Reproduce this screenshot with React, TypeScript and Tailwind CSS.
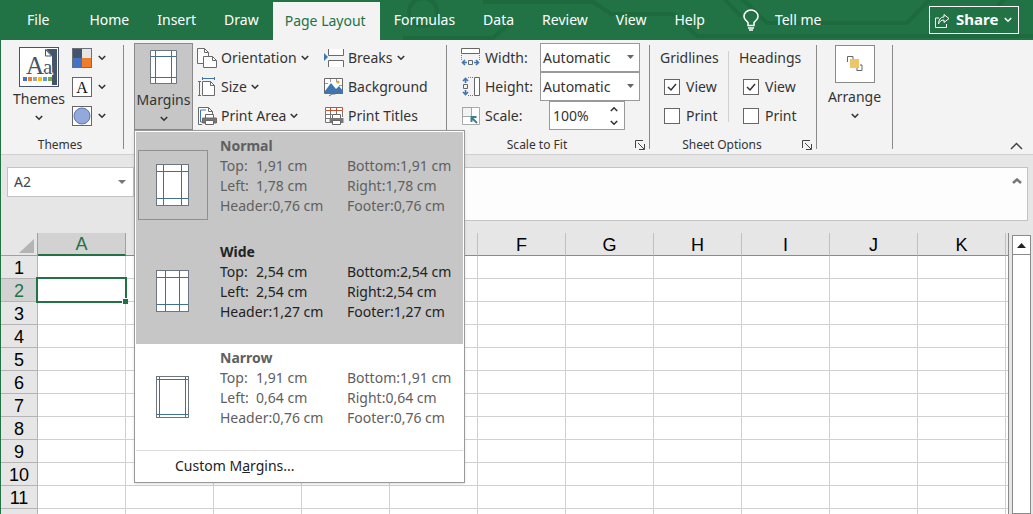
import React, { useState } from 'react';

const TABS = ['Home', 'Insert', 'Draw', 'Page Layout', 'Formulas', 'Data', 'Review', 'View', 'Help'];
const COLUMNS = ['A', 'B', 'C', 'D', 'E', 'F', 'G', 'H', 'I', 'J', 'K'];
const ROWS = [1, 2, 3, 4, 5, 6, 7, 8, 9, 10, 11];

const PRESETS = [
  { name: 'Normal', top: '1,91', bottom: '1,91', left: '1,78', right: '1,78', header: '0,76', footer: '0,76', x: 7, y: 7 },
  { name: 'Wide', top: '2,54', bottom: '2,54', left: '2,54', right: '2,54', header: '1,27', footer: '1,27', x: 9, y: 7 },
  { name: 'Narrow', top: '1,91', bottom: '1,91', left: '0,64', right: '0,64', header: '0,76', footer: '0,76', x: 3, y: 3 },
];

function Chevron({ className = '' }) {
  return (
    <svg width="8" height="6" viewBox="0 0 8 6" className={className} fill="none" stroke="currentColor" strokeWidth="1.6">
      <path d="M.8 1L4 4.200 7.200 1" />
    </svg>
  );
}

function MarginsPage({ x, y }: { x: number; y: number }) {
  return (
    <svg width="33" height="42" viewBox="0 0 33 42">
      <rect x="0.5" y="0.5" width="32" height="41" fill="#fff" stroke="#6b7680" />
      <path
        d={`M${x + 0.5} 1v40M${32.5 - x} 1v40M1 ${y + 0.5}h31M1 ${41.5 - y}h31`}
        stroke="#41718f"
      />
    </svg>
  );
}

function ThemesIcon() {
  return (
    <svg width="40" height="40" viewBox="0 0 40 40">
      <rect x="0.5" y="0.5" width="39" height="39" fill="#fff" stroke="#44546a" />
      <path d="M27 2h11v36h-5V9z" fill="#44546a" />
      <path d="M26.500 2.500l6 6.500h-6z" fill="#fff" stroke="#44546a" />
      <g fontFamily="Liberation Serif, serif" fill="#44546a" stroke="#fff" strokeWidth="2" paintOrder="stroke">
        <text x="24" y="27" fontSize="21">a</text>
        <text x="7" y="27" fontSize="25">A</text>
      </g>
      <path d="M4 30h4v4H4z" fill="#4472c4" />
      <path d="M9 30h4v4H9z" fill="#ed7d31" />
      <path d="M14 30h4v4h-4z" fill="#a5a5a5" />
      <path d="M19 30h4v4h-4z" fill="#ffc000" />
      <path d="M24 30h4v4h-4z" fill="#5b9bd5" />
      <path d="M29 30h4v4h-4z" fill="#70ad47" />
    </svg>
  );
}

function ColorsIcon() {
  return (
    <svg width="20" height="20" viewBox="0 0 20 20">
      <rect width="20" height="20" fill="#6b7078" />
      <path d="M1 1h9v9H1z" fill="#44546a" />
      <path d="M10 1h9v9h-9z" fill="#e7e6e6" />
      <path d="M1 10h9v9H1z" fill="#4472c4" />
      <path d="M10 10h9v9h-9z" fill="#f07d2c" />
    </svg>
  );
}

function FontsIcon() {
  return (
    <svg width="20" height="20" viewBox="0 0 20 20">
      <rect x="0.5" y="0.5" width="19" height="19" fill="#fff" stroke="#666" />
      <text x="10" y="16" textAnchor="middle" fontSize="16" fontFamily="Liberation Serif, serif" fill="#111">A</text>
    </svg>
  );
}

function EffectsIcon() {
  return (
    <svg width="20" height="20" viewBox="0 0 20 20">
      <rect x="0.5" y="0.5" width="19" height="19" fill="#fff" stroke="#666" />
      <circle cx="10" cy="10" r="8" fill="#93a9dc" stroke="#5c74b0" />
    </svg>
  );
}

function OrientationIcon() {
  return (
    <svg width="20" height="20" viewBox="0 0 20 20" fill="#fff" stroke="#6a6a6a">
      <path d="M.5.5h7l4 4v11H.5z" />
      <path d="M7.500.5v4h4" fill="none" />
      <path d="M6.500 8.500h9l4 4v7h-13z" />
      <path d="M15.500 8.500v4h4" fill="none" />
    </svg>
  );
}

function SizeIcon() {
  return (
    <svg width="20" height="20" viewBox="0 0 20 20" fill="none">
      <path d="M5.500 4.500h8l4 4v10h-12z" fill="#fff" stroke="#6a6a6a" />
      <path d="M13.500 4.500v4h4" stroke="#6a6a6a" />
      <path d="M5 1.500h13M5.500 0v3M17.500 0v3M2.500 5v14M1 4.500h3M1 18.500h3" stroke="#3d76b0" />
    </svg>
  );
}

function Printer() {
  return (
    <g>
      <path d="M8.500 8.500h8v4h-8z" fill="#fff" stroke="#666" />
      <path d="M5.500 12h14v5h-14z" fill="#777" />
      <path d="M8.500 14.500h8v4h-8z" fill="#fff" stroke="#666" />
    </g>
  );
}

function PrintAreaIcon() {
  return (
    <svg width="20" height="20" viewBox="0 0 20 20" fill="#fff" stroke="#6a6a6a">
      <path d="M5 18.500H1.500v-17h10l4 4V8" />
      <path d="M11.500 1.500v4h4" fill="none" />
      <path d="M7 16H3.500V4H9" fill="none" stroke="#3d76b0" />
      <Printer />
    </svg>
  );
}

function BreaksIcon() {
  return (
    <svg width="20" height="20" viewBox="0 0 20 20">
      <path d="M4.500 1v6.500h15V1M4.500 19v-6.500h15V19" fill="#fff" stroke="#6a6a6a" />
      <path d="M0 5l4 4-4 4z" fill="#3d76b0" />
    </svg>
  );
}

function BackgroundIcon() {
  return (
    <svg width="20" height="20" viewBox="0 0 20 20">
      <path d="M.5 1.500h18v15H.5z" fill="#fff" stroke="#6a6a6a" />
      <path d="M6.500 2v3M12.500 2v3M1 6.500h3M15 8.500h3" stroke="#999" />
      <path d="M1 14l6-8 5 6 3-3 4 5v3H1z" fill="#3d76b0" />
      <circle cx="14" cy="5" r="1.600" fill="#e8a33d" />
      <path d="M5 19l3-2h3l4-3" fill="none" stroke="#6a6a6a" />
    </svg>
  );
}

function PrintTitlesIcon() {
  return (
    <svg width="20" height="20" viewBox="0 0 20 20">
      <path d="M1.500 1.500h17v15h-17z" fill="#fff" />
      <path d="M1.500 5v11.500H6M1.500 8.500H8M1.500 12.500H6M6.500 5v7M12.500 5v3M18.500 5v6" fill="none" stroke="#777" />
      <path d="M1.500 1.500h17v3h-17zM6.500 1.500v3M12.500 1.500v3" fill="#fff" stroke="#c8502d" />
      <Printer />
    </svg>
  );
}

function FitWidthIcon() {
  return (
    <svg width="20" height="20" viewBox="0 0 20 20" fill="none">
      <path d="M.5.500h18v5H.5z" fill="#fff" stroke="#666" />
      <path d="M.5 7v5M18.500 7v5" stroke="#777" strokeDasharray="1 1" />
      <path d="M7.500 12.500h4v4h-4z" stroke="#666" />
      <path d="M6 14.500H1M4 12l-2.500 2.500L4 17M13 14.500h5M15 12l2.500 2.500L15 17" stroke="#3d76b0" strokeWidth="1.600" />
    </svg>
  );
}

function FitHeightIcon() {
  return (
    <svg width="20" height="20" viewBox="0 0 20 20" fill="none">
      <path d="M13.500.5h5v18h-5z" fill="#fff" stroke="#666" />
      <path d="M7 .5h6M7 18.500h6" stroke="#777" strokeDasharray="1 1" />
      <path d="M2.500 7.500h4v4h-4z" stroke="#666" />
      <path d="M4.500 6V1M2 4l2.500-2.500L7 4M4.500 13v5M2 15l2.500 2.500L7 15" stroke="#3d76b0" strokeWidth="1.600" />
    </svg>
  );
}

function ScaleIcon() {
  return (
    <svg width="20" height="20" viewBox="0 0 20 20" fill="none">
      <path d="M1.500 11v7.500h17v-17H11" fill="#fff" stroke="#aaa" />
      <path d="M1.500 1.500h9v9h-9z" fill="#f3f3f3" stroke="#555" strokeDasharray="1 1" />
      <path d="M16 17l-5-5M10.500 16v-5h5" stroke="#3d7f95" strokeWidth="2" />
    </svg>
  );
}

function ArrangeIcon() {
  return (
    <svg width="16" height="16" viewBox="0 0 16 16" fill="none">
      <path d="M6 .5H.5V6M5 .5h1V3M10 14.500h5V9H13M10 15v-3" stroke="#666" />
      <path d="M3 3h9v9H3z" fill="#f0c468" />
    </svg>
  );
}

function Launcher({ label }: { label: string }) {
  return (
    <button aria-label={label}>
      <svg width="10" height="10" viewBox="0 0 10 10" fill="none" stroke="#444">
        <path d="M.5 8V.5H8M3 3l6 6M9.500 4v5.500H4" />
      </svg>
    </button>
  );
}

function Separator() {
  return <div className="my-[5px] w-px shrink-0 bg-[#8a8a8a]" />;
}

function RibbonButton({ icon, label, arrow = false }: { icon: React.ReactNode; label: string; arrow?: boolean }) {
  return (
    <button className="flex h-[29px] items-center gap-1 whitespace-nowrap">
      {icon}
      <span>{label}</span>
      {arrow && <Chevron />}
    </button>
  );
}

function SheetOption({ title }: { title: string }) {
  return (
    <fieldset>
      <legend className="flex h-[29px] items-center">{title}</legend>
      {['View', 'Print'].map((name) => (
        <label key={name} className="ml-1 flex h-[29px] items-center gap-[6px]">
          <span className="relative flex">
            <input
              type="checkbox"
              defaultChecked={name === 'View'}
              className="peer size-4 appearance-none border border-[#666] bg-white"
            />
            <svg
              width="16"
              height="16"
              viewBox="0 0 16 16"
              className="pointer-events-none absolute inset-0 hidden peer-checked:block"
              fill="none"
              stroke="#333"
              strokeWidth="1.500"
            >
              <path d="M4 8l3 3 5-6" />
            </svg>
          </span>
          {name}
        </label>
      ))}
    </fieldset>
  );
}

function Select({ id }: { id: string }) {
  return (
    <div className="relative flex w-[100px]">
      <select id={id} className="w-full appearance-none border border-[#999] bg-white pl-[2px] outline-none">
        <option>Automatic</option>
      </select>
      <svg width="7" height="4" viewBox="0 0 7 4" className="pointer-events-none absolute top-3 right-[6px]">
        <path d="M0 0h7L3.500 4z" fill="#666" />
      </svg>
    </div>
  );
}

function MarginsMenu({ selected, onSelect }: { selected: string; onSelect: (name: string) => void }) {
  return (
    <div
      role="menu"
      className="absolute top-full left-0 z-10 w-[331px] border border-[#999] bg-white p-px text-[#222] shadow-sm"
    >
      {PRESETS.map((p) => (
        <button
          key={p.name}
          role="menuitemradio"
          aria-checked={p.name === selected}
          onClick={() => onSelect(p.name)}
          className={`flex h-[106px] w-full items-start gap-3 pl-[2px] text-left leading-5 ${
            p.name === 'Narrow' ? 'bg-white' : 'bg-[#c6c6c6]'
          } ${p.name === 'Wide' ? 'text-[#222]' : 'text-[#606060]'}`}
        >
          <span
            className={`mt-[18px] flex size-[70px] items-center border pl-[17px] ${
              p.name === selected ? 'border-[#909090]' : 'border-transparent'
            }`}
          >
            <MarginsPage x={p.x} y={p.y} />
          </span>
          <span className="mt-1 grid auto-rows-[20px] grid-cols-[127px_auto] whitespace-nowrap">
            <b className="col-span-2">{p.name}</b>
            <span className="flex">
              <span className="w-9">Top:</span>
              {p.top} cm
            </span>
            <span>Bottom:{p.bottom} cm</span>
            <span className="flex">
              <span className="w-9">Left:</span>
              {p.left} cm
            </span>
            <span>Right:{p.right} cm</span>
            <span>Header:{p.header} cm</span>
            <span>Footer:{p.footer} cm</span>
          </span>
        </button>
      ))}
      <button role="menuitem" className="flex h-[31px] w-full items-center border-t border-[#ddd] pl-[39px]">
        <span>
          Custom M<u>a</u>rgins...
        </span>
      </button>
    </div>
  );
}

function TitleTabs() {
  return (
    <header className="relative flex h-10 shrink-0 items-stretch bg-[#217346] text-white">
      {/* circuit-like decoration behind the tabs */}
      <svg
        className="absolute top-0 right-0"
        width="660"
        height="40"
        viewBox="0 0 660 40"
        fill="none"
        stroke="#1d6a3f"
        strokeWidth="4"
      >
        <path d="M110 2h110l18 12h62l24 22h336M348-4l20 20M366-4l28 27h140l26-27M625 6l12-12M30 38h90l14-12" />
        <circle cx="50" cy="12" r="14" />
      </svg>
      <nav className="relative flex items-stretch pl-3">
        <button className="mr-3 px-3.5">File</button>
        {TABS.map((tab) => (
          <button
            key={tab}
            className={
              tab === 'Page Layout'
                ? 'mt-[2px] bg-[#f3f3f3] pr-3.5 pl-3 text-[#217346]'
                : 'px-3.5'
            }
          >
            {tab}
          </button>
        ))}
      </nav>
      <button className="relative ml-6 flex items-center gap-4">
        <svg width="16" height="22" viewBox="0 0 16 22" fill="none" stroke="#fff" strokeWidth="1.500">
          <path d="M5 16.500v-3C3 11.500 1 10 1 7.500a7 6.500 0 0 1 14 0c0 2.500-2 4-4 6v3zM5 19h6M6 21h4" />
        </svg>
        Tell me
      </button>
      <button className="relative my-[6px] mr-[14px] ml-auto flex w-[90px] items-center gap-[6px] border border-white pl-[5px] text-[15px] font-bold">
        <svg width="15" height="15" viewBox="0 0 15 15" fill="none" stroke="#fff" className="shrink-0">
          <path d="M4 5H.5v9.500h11V11" />
          <path d="M9 1.500l5 4-5 4V7C6 7 4.500 8.500 3.500 11 3.500 7 5.500 4 9 4z" />
        </svg>
        Share
        <Chevron className="shrink-0" />
      </button>
    </header>
  );
}

function Ribbon() {
  const [margins, setMargins] = useState('Normal');

  return (
    <div className="flex shrink-0 border-b border-[#d0d0d0] bg-[#f3f3f3]">
      <section className="w-[122px] pt-[3px]">
        <div className="flex h-[87px] pl-3">
          <button className="flex w-[52px] flex-col items-center pt-1">
            <ThemesIcon />
            <span className="leading-6">Themes</span>
            <Chevron className="mt-1" />
          </button>
          <div className="ml-[7px]">
            <button aria-label="Colors" className="flex h-[29px] items-center gap-[6px]"><ColorsIcon /><Chevron /></button>
            <button aria-label="Fonts" className="flex h-[29px] items-center gap-[6px]"><FontsIcon /><Chevron /></button>
            <button aria-label="Effects" className="flex h-[29px] items-center gap-[6px]"><EffectsIcon /><Chevron /></button>
          </div>
        </div>
        <h2 className="flex h-6 items-center justify-center pt-[6px] pr-1 text-xs">Themes</h2>
      </section>
      <Separator />

      <section className="flex w-[322px] items-start pt-[3px] pl-[10px]">
        <div className="relative">
          <button className="flex h-[87px] w-[59px] flex-col items-center border border-[#8a8a8a] bg-[#c6c6c6] pt-[6px]">
            <svg width="27" height="34" viewBox="0 0 27 34">
              <path d="M.5.500h26v33H.5z" fill="#fff" stroke="#6b7680" />
              <path d="M5.500 1v32M21.500 1v32M1 6.500h25M1 27.500h25" stroke="#41718f" />
            </svg>
            <span className="mt-1 leading-6">Margins</span>
            <Chevron className="mt-1" />
          </button>
          <MarginsMenu selected={margins} onSelect={setMargins} />
        </div>
        <div className="ml-1 w-[127px]">
          <RibbonButton icon={<OrientationIcon />} label="Orientation" arrow />
          <RibbonButton icon={<SizeIcon />} label="Size" arrow />
          <RibbonButton icon={<PrintAreaIcon />} label="Print Area" arrow />
        </div>
        <div>
          <RibbonButton icon={<BreaksIcon />} label="Breaks" arrow />
          <RibbonButton icon={<BackgroundIcon />} label="Background" />
          <RibbonButton icon={<PrintTitlesIcon />} label="Print Titles" />
        </div>
      </section>
      <Separator />

      <section className="w-[202px] pt-[3px]">
        <div className="grid h-[87px] grid-cols-[79px_auto] grid-rows-3 pl-[14px]">
          <label htmlFor="fit-width" className="flex items-center gap-1"><FitWidthIcon />Width:</label>
          <Select id="fit-width" />
          <label htmlFor="fit-height" className="flex items-center gap-1"><FitHeightIcon />Height:</label>
          <Select id="fit-height" />
          <label htmlFor="scale" className="flex items-center gap-1"><ScaleIcon />Scale:</label>
          <div className="ml-[9px] flex w-[76px] items-center border border-[#999] bg-white pr-[6px] pl-[3px]">
            <input id="scale" defaultValue="100%" className="w-full min-w-0 outline-none" />
            <div className="flex flex-col gap-2">
              <button aria-label="Increase" className="rotate-180"><Chevron className="block" /></button>
              <button aria-label="Decrease"><Chevron className="block" /></button>
            </div>
          </div>
        </div>
        <div className="flex h-6 items-center pt-[6px] pr-1">
          <h2 className="grow pr-2 text-center text-xs">Scale to Fit</h2>
          <Launcher label="Page setup" />
        </div>
      </section>
      <Separator />

      <section className="w-[166px] pt-[3px]">
        <div className="flex h-[87px] pl-[10px]">
          <SheetOption title="Gridlines" />
          <div className="mx-auto my-2 w-px bg-[#d0d0d0]" />
          <div className="w-[77px]"><SheetOption title="Headings" /></div>
        </div>
        <div className="flex h-6 items-center pt-[6px] pr-1">
          <h2 className="grow pr-2 text-center text-xs">Sheet Options</h2>
          <Launcher label="Sheet options" />
        </div>
      </section>
      <Separator />

      <section className="flex w-[75px] justify-center pt-[5px]">
        <button className="flex flex-col items-center self-start">
          <span className="flex h-[38px] w-10 items-center justify-center border border-[#8a8a8a] bg-white">
            <ArrangeIcon />
          </span>
          <span className="mt-[2px] leading-6">Arrange</span>
          <Chevron className="mt-1" />
        </button>
      </section>
      <Separator />

      <button aria-label="Collapse the ribbon" className="mt-auto mr-[10px] mb-1 ml-auto">
        <svg width="13" height="8" viewBox="0 0 13 8" fill="none" stroke="#444" strokeWidth="1.500">
          <path d="M1 7l5.500-5.500L12 7" />
        </svg>
      </button>
    </div>
  );
}

function FormulaBar() {
  return (
    <div className="flex h-[78px] shrink-0 items-start bg-[#e6e6e6] pt-3 pr-[5px] pl-[6px]">
      <div className="flex h-[30px] w-[127px] items-center border border-[#c3c3c3] bg-white pr-[7px] pl-[6px]">
        <input aria-label="Name box" defaultValue="A2" className="w-full min-w-0 text-[#444] outline-none" />
        <svg width="8" height="4" viewBox="0 0 8 4" className="shrink-0">
          <path d="M0 0h8L4 4z" fill="#777" />
        </svg>
      </div>
      <div className="ml-24 flex h-[54px] grow items-start border border-[#c3c3c3] bg-[#fdfdfd] pr-[5px]">
        <textarea aria-label="Formula bar" className="h-full grow resize-none outline-none" />
        <button aria-label="Collapse formula bar" className="mt-[10px]">
          <svg width="10" height="6" viewBox="0 0 10 6" fill="none" stroke="#777" strokeWidth="2.500">
            <path d="M1 5l4-3.500L9 5" />
          </svg>
        </button>
      </div>
    </div>
  );
}

function Sheet() {
  return (
    <div className="flex min-h-0 grow bg-[#e6e6e6]">
      <div className="min-w-0 grow overflow-hidden border-r border-[#8a8a8a] bg-white">
        <table className="w-full table-fixed border-separate border-spacing-0 font-[Liberation_Sans,Arial,sans-serif] text-lg leading-5 text-black">
          <thead>
            <tr className="h-[23px] bg-[#e6e6e6]">
              <th className="w-[37px] border-r border-b border-[#a0a0a0] p-0">
                <svg width="15" height="14" viewBox="0 0 15 14" className="mt-1 mr-[3px] ml-auto">
                  <path d="M15 0v14H0z" fill="#b4b4b4" />
                </svg>
              </th>
              {COLUMNS.map((col) => (
                <th
                  key={col}
                  className={`w-[88px] border-r p-0 font-normal ${
                    col === 'A'
                      ? 'border-b-2 border-r-[#a0a0a0] border-b-[#217346] bg-[#d2d2d2] pt-px text-[#217346]'
                      : 'border-b border-r-[#c0c0c0] border-b-[#8a8a8a] pt-[2px]'
                  }`}
                >
                  {col}
                </th>
              ))}
              <th className="border-b border-[#8a8a8a] p-0" />
            </tr>
          </thead>
          <tbody>
            {ROWS.map((row) => (
              <tr key={row} className="h-[23px]">
                <th
                  className={`border-r border-b border-[#b4b4b4] p-0 pt-[2px] font-normal ${
                    row === 2 ? 'bg-[#d2d2d2] text-[#217346]' : 'bg-[#e6e6e6]'
                  }`}
                >
                  {row}
                </th>
                {COLUMNS.map((col) => (
                  <td key={col} className="relative border-r border-b border-[#d0d0d0] p-0">
                    {row === 2 && col === 'A' && (
                      <div className="absolute -inset-[2px] z-1 border-2 border-[#217346]">
                        <div className="absolute -right-[3px] -bottom-[3px] size-[6px] border-t border-l border-white bg-[#217346]" />
                      </div>
                    )}
                  </td>
                ))}
                <td className="border-b border-[#d0d0d0] p-0" />
              </tr>
            ))}
            <tr className="h-[23px]">
              <th className="border-r border-[#b4b4b4] bg-[#e6e6e6] p-0" />
              {COLUMNS.map((col) => (
                <td key={col} className="border-r border-[#d0d0d0] p-0" />
              ))}
              <td className="p-0" />
            </tr>
          </tbody>
        </table>
      </div>
      <div className="mt-[2px] mr-[2px] ml-[3px] w-[19px] shrink-0 border border-[#8a8a8a] bg-white">
        <button aria-label="Scroll up" className="flex h-[19px] w-full items-center justify-center border-b border-[#8a8a8a]">
          <svg width="9" height="5" viewBox="0 0 9 5">
            <path d="M4.500 0L9 5H0z" fill="#222" />
          </svg>
        </button>
      </div>
    </div>
  );
}

function App() {
  return (
    <div className="flex h-screen flex-col overflow-hidden border-l border-[#217346] font-[Noto_Sans,sans-serif] text-sm text-[#333]">
      <TitleTabs />
      <Ribbon />
      <FormulaBar />
      <Sheet />
    </div>
  );
}

export default App;
